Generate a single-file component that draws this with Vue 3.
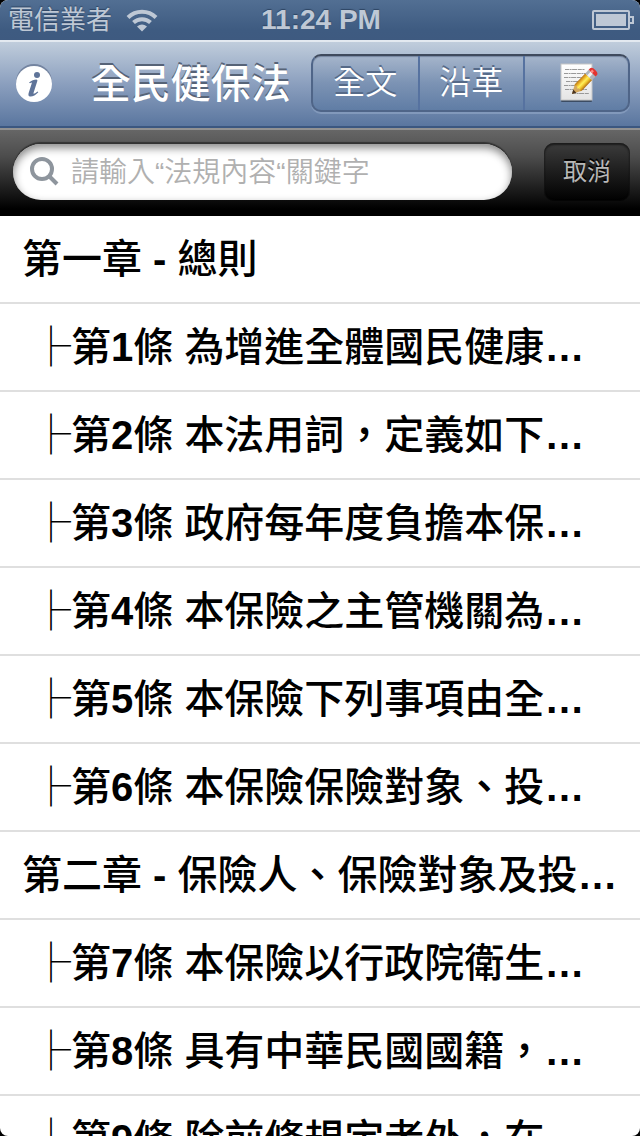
<script setup>
import { ref } from 'vue'

const keyword = ref('')

const rows = [
  { chapter: '第一章', text: '總則' },
  { no: 1, text: '為增進全體國民健康', more: true },
  { no: 2, text: '本法用詞，定義如下', more: true },
  { no: 3, text: '政府每年度負擔本保', more: true },
  { no: 4, text: '本保險之主管機關為', more: true },
  { no: 5, text: '本保險下列事項由全', more: true },
  { no: 6, text: '本保險保險對象、投', more: true },
  { chapter: '第二章', text: '保險人、保險對象及投', more: true },
  { no: 7, text: '本保險以行政院衛生', more: true },
  { no: 8, text: '具有中華民國國籍，', more: true },
  { no: 9, text: '除前條規定者外，在', more: true }
]
</script>

<template>
  <div class="screen">
    <header class="status">
      <div class="carrier">
        <span>電信業者</span>
        <svg class="wifi" viewBox="0 0 32 24" aria-hidden="true">
          <path d="M2 9.500A20 20 0 0 1 30 9.500" />
          <path d="M7.500 14.500A12.500 12.500 0 0 1 24.500 14.500" />
          <path class="dot" d="M11 18.500Q16 14.500 21 18.500L16 23.500Z" />
        </svg>
      </div>
      <time class="clock">11:24 PM</time>
      <div class="power">
        <svg class="battery" viewBox="0 0 42 20" aria-hidden="true">
          <rect x="1" y="1" width="36" height="18" rx="1" class="case" />
          <rect x="4" y="4" width="30" height="12" class="charge" />
          <path d="M38 7h3v6h-3" class="case" />
        </svg>
      </div>
    </header>

    <nav class="bar">
      <button class="info" type="button" aria-label="資訊">
        <svg viewBox="0 0 36 38" aria-hidden="true">
          <circle cx="18" cy="18" r="18" fill="#7484a0" />
          <circle cx="18" cy="20" r="18" fill="#fff" />
          <circle cx="21" cy="11" r="3" fill="#5f7499" />
          <path d="M13 18.500C15.500 16.500 18 15.500 20.500 15.500L21.500 16.500L17.500 29C17.200 30.300 18.500 30 21.500 27.500L22.300 28.300C19.500 31.500 16 33 13.800 32.500C12 32 12.300 30 12.800 28.500L15.700 19.500C16 18.300 15.500 18.400 14 19.300Z" fill="#5f7499" />
        </svg>
      </button>
      <h1 class="title">全民健保法</h1>
      <div class="segments">
        <button type="button">全文</button>
        <button type="button">沿革</button>
        <button class="note" type="button" aria-label="筆記">
          <svg class="memo" viewBox="0 0 38 40" aria-hidden="true">
            <defs>
              <linearGradient id="sheet" x1="0" y1="0" x2="0" y2="1">
                <stop offset="0" stop-color="#fff" />
                <stop offset="1" stop-color="#e4e4e4" />
              </linearGradient>
              <linearGradient id="wood" x1="0" y1="0" x2="0" y2="1">
                <stop offset="0" stop-color="#b87514" />
                <stop offset=".28" stop-color="#f0b92b" />
                <stop offset=".5" stop-color="#fff15c" />
                <stop offset=".72" stop-color="#f0c52c" />
                <stop offset="1" stop-color="#ae6a12" />
              </linearGradient>
            </defs>
            <rect x="1" y="3" width="31" height="36" rx="1" fill="#3c4c63" />
            <rect x="1" y="1" width="31" height="36" fill="url(#sheet)" stroke="#c6c6c6" />
            <g stroke="#999" stroke-width="1.200" stroke-dasharray="4 .6 2 .5 5 .7">
              <path d="M5 6.500h20" /><path d="M4 10.500h22" /><path d="M4 14.500h20" />
              <path d="M6 18.500h16" /><path d="M4 22.500h13" /><path d="M5 26.500h22" />
              <path d="M12 30.500h17" />
            </g>
            <g transform="translate(12 31) rotate(-46)">
              <path d="M0 0L9 -4.800V4.800Z" fill="#d5a95e" />
              <path d="M0 0L4 -2.200V2.200Z" fill="#4a3420" />
              <path d="M8 -4.300L10 -4.800H24V4.800H10L8 4.300L9 1.500L7.500 0L9 -1.500Z" fill="url(#wood)" />
              <rect x="24" y="-4.800" width="5" height="9.600" fill="#aeb4bb" />
              <rect x="24" y="-2" width="5" height="3" fill="#f1f3f5" />
              <path d="M29 -4.800H31Q33.500 -4.500 33.500 0T31 4.800H29Z" fill="#e3332f" />
              <path d="M29 -2.500H31.500V0H29Z" fill="#ff8a83" />
            </g>
          </svg>
        </button>
      </div>
    </nav>

    <form class="search" role="search" @submit.prevent>
      <label class="field">
        <svg class="lens" viewBox="0 0 30 30" aria-hidden="true">
          <circle cx="13" cy="12" r="10" />
          <path d="M20 19L28 27" />
        </svg>
        <input v-model="keyword" type="text" placeholder="請輸入“法規內容“關鍵字" aria-label="法規內容關鍵字" />
      </label>
      <button class="cancel" type="button">取消</button>
    </form>

    <main>
      <ul class="list">
        <li v-for="row in rows" :key="row.no || row.chapter">
          <a v-if="row.chapter" href="#" class="row">{{ row.chapter }}<b> - </b>{{ row.text }}<b v-if="row.more">…</b></a>
          <a v-else href="#" class="row article"><span class="branch">├</span>第<b>{{ row.no }}</b>條<b>&nbsp;</b>{{ row.text }}<b v-if="row.more">…</b></a>
        </li>
      </ul>
    </main>
  </div>
</template>

<style>
html,
body {
  margin: 0;
  background: #000;
}
</style>

<style scoped>
.screen {
  display: flex;
  flex-direction: column;
  height: 100vh;
  overflow: hidden;
  border-radius: 8px;
  background: #fff;
  font-family: "Liberation Sans", "Noto Sans CJK TC", sans-serif;
  color: #000;
}

button {
  margin: 0;
  padding: 0;
  border: 0;
  background: none;
  font-family: inherit;
  color: inherit;
}

svg {
  display: block;
}

.status {
  display: grid;
  grid-template-columns: 1fr auto 1fr;
  align-items: center;
  flex: none;
  height: 40px;
  padding: 0 6px 0 8px;
  background: linear-gradient(#526f93, #3e5b81 75%, #3e5a80);
  color: #bec8d5;
  text-shadow: 0 -1px 1px #2e4563;
}

.carrier {
  display: flex;
  align-items: center;
  gap: 14px;
  font-size: 26px;
  line-height: 40px;
}

.wifi {
  width: 32px;
  height: 24px;
  fill: none;
  stroke: #bec8d5;
  stroke-width: 4;
}

.wifi .dot {
  fill: #bec8d5;
  stroke: none;
}

.clock {
  font-size: 28px;
  font-weight: 700;
  line-height: 40px;
}

.power {
  display: flex;
  justify-content: flex-end;
}

.battery {
  width: 42px;
  height: 20px;
}

.case {
  fill: none;
  stroke: #bec8d5;
  stroke-width: 2;
}

.charge {
  fill: #bec8d5;
}

.bar {
  display: flex;
  align-items: center;
  flex: none;
  box-sizing: border-box;
  height: 88px;
  padding: 0 10px 2px 16px;
  border-top: 2px solid #e3e9f0;
  border-bottom: 2px solid #3b5780;
  background: linear-gradient(#c0cddc, #8b9fbe 50%, #5a769f);
  color: #fff;
}

.info {
  width: 36px;
  height: 38px;
}

.title {
  flex: 1;
  margin: 0;
  padding: 2px 20px 0 0;
  font-size: 40px;
  font-weight: 500;
  line-height: 48px;
  text-align: right;
  text-shadow: 0 -2px 0 #566377;
  white-space: nowrap;
}

.segments {
  display: grid;
  grid-template-columns: repeat(3, 1fr);
  flex: 0 0 52%;
  box-sizing: border-box;
  height: 58px;
  border: 2px solid #4f6588;
  border-top-color: #3f4a5d;
  border-radius: 10px;
  background: linear-gradient(#a5b5cb, #7c93b4 50%, #607da5);
  box-shadow: 0 2px 0 #8299bb, inset 0 1px 1px #7686a0;
}

.segments button {
  display: flex;
  align-items: center;
  justify-content: center;
  font-size: 32px;
  font-weight: 350;
  line-height: 54px;
  text-shadow: 0 -2px 0 #566a88;
}

.segments button + button {
  border-left: 2px solid #5672a0;
}

.segments .note {
  padding-left: 6px;
}

.memo {
  width: 38px;
  height: 40px;
}

.search {
  display: flex;
  align-items: center;
  gap: 32px;
  flex: none;
  box-sizing: border-box;
  height: 88px;
  padding: 0 10px 2px 13px;
  border-top: 2px solid #929292;
  background: linear-gradient(#666, #4d4d4d 30%, #000 92%);
}

.field {
  display: flex;
  align-items: center;
  gap: 12px;
  flex: 1;
  box-sizing: border-box;
  height: 56px;
  padding: 0 16px;
  border-radius: 28px;
  background: #fff;
  box-shadow: 0 -2px 1px #333, inset 0 4px 8px #888;
}

.lens {
  flex: none;
  width: 30px;
  height: 30px;
  fill: none;
  stroke: #8e959d;
  stroke-width: 4;
}

.field input {
  flex: 1;
  min-width: 0;
  height: 44px;
  padding: 2px 0 0;
  border: 0;
  outline: 0;
  background: none;
  font-family: inherit;
  font-size: 28px;
  font-weight: 350;
}

.field input::placeholder {
  color: #b0b0b0;
  opacity: 1;
}

.cancel {
  width: 86px;
  height: 58px;
  padding-bottom: 6px;
  border-radius: 10px;
  background: linear-gradient(#3c3c3c, #1d1d1d 50%, #000);
  box-shadow: inset 0 2px 2px #1c1c1c, inset 0 0 2px #111;
  color: #b8b8b8;
  font-size: 24px;
  text-shadow: 0 -2px 0 #000;
}

.list {
  margin: 0;
  padding: 0;
  list-style: none;
}

.row {
  display: block;
  box-sizing: border-box;
  height: 88px;
  padding: 0 20px 0 22px;
  border-bottom: 2px solid #dfdfdf;
  color: #000;
  font-size: 40px;
  font-weight: 500;
  line-height: 86px;
  text-decoration: none;
  white-space: pre;
}

.article {
  padding-left: 31px;
}

.branch {
  font-family: "Noto Sans CJK TC", sans-serif;
  font-weight: 300;
  line-height: 40px;
}

b {
  font-weight: 700;
}
</style>
